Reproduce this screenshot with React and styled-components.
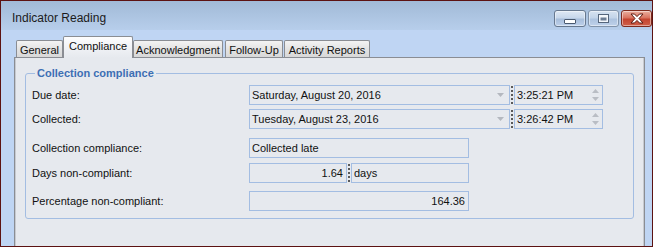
import React from 'react';
import styled, { createGlobalStyle } from 'styled-components';

const Global = createGlobalStyle`
  html, body { margin: 0; padding: 0; }
  body {
    font-family: "Liberation Sans", Arial, sans-serif;
    font-size: 11px;
    color: #000;
  }
`;

const Window = styled.div`
  width: 653px;
  height: 247px;
  box-sizing: border-box;
  border: 1px solid #5c1212;
  display: flex;
  flex-direction: column;
  background: #bfd5f3;
  overflow: hidden;
`;

const TitleBar = styled.div`
  height: 29px;
  flex: none;
  display: flex;
  align-items: flex-start;
  background: linear-gradient(#a1bad7, #b7ceeb);
`;

const Title = styled.div`
  flex: 1;
  font-size: 12px;
  line-height: 14px;
  color: #1b1b1b;
  padding: 10px 0 0 11px;
`;

const Controls = styled.div`
  display: flex;
  gap: 2px;
  margin-top: 9px;
`;

const CtrlButton = styled.div`
  width: ${(p) => p.$w}px;
  height: 17px;
  box-sizing: border-box;
  border-radius: 3px;
  border: 1px solid ${(p) => (p.$close ? '#7d2a1d' : p.$dim ? '#8193aa' : '#67788f')};
  background: ${(p) =>
    p.$close
      ? 'linear-gradient(#eab0a0 0%, #d9735f 45%, #c4442f 55%, #cf5f48 100%)'
      : p.$dim
      ? 'linear-gradient(#d6e2f0 0%, #c3d4e9 45%, #adc3df 55%, #bed1ea 100%)'
      : 'linear-gradient(#dfe8f4 0%, #c7d7eb 45%, #a8bedb 55%, #bdd0ea 100%)'};
  box-shadow: inset 0 0 0 1px rgba(255, 255, 255, 0.45);
  display: flex;
  align-items: center;
  justify-content: center;
`;

const Body = styled.div`
  flex: 1;
  display: flex;
  flex-direction: column;
  padding: 0 7px 0 13px;
  min-height: 0;
`;

const TabStrip = styled.div`
  height: 27px;
  flex: none;
  display: flex;
  align-items: flex-end;
  padding-left: 2px;
  position: relative;
  z-index: 1;
`;

const Tab = styled.div`
  box-sizing: border-box;
  width: ${(p) => p.$w}px;
  margin-left: ${(p) => p.$ml || 0}px;
  height: ${(p) => (p.$active ? 22 : 17)}px;
  margin-bottom: ${(p) => (p.$active ? -1 : 0)}px;
  border: 1px solid #8a8d93;
  border-bottom: none;
  border-radius: 2px 2px 0 0;
  background: ${(p) =>
    p.$active ? 'linear-gradient(#fdfdfe, #eef0f4 60%, #e6e9ee)' : 'linear-gradient(#f3f3f3, #e3e3e3 50%, #d8d8d8)'};
  display: flex;
  align-items: ${(p) => (p.$active ? 'flex-start' : 'center')};
  padding-top: ${(p) => (p.$active ? 3 : 1)}px;
  justify-content: center;
  color: #111;
  white-space: nowrap;
`;

const Panel = styled.div`
  flex: 1;
  border: 1px solid #8a8d93;
  border-bottom: none;
  background: #e6e9ee;
  box-shadow: inset 1px 0 0 #c7cad0, inset -1px 0 0 #c7cad0;
  padding: 8px 10px 0 10px;
`;

const Group = styled.fieldset`
  margin: 0;
  min-width: 0;
  border: 1px solid #a3bde2;
  border-radius: 3px;
  padding: 5px 6px 7px 6px;
`;

const Legend = styled.legend`
  margin-left: 3px;
  padding: 0 2px;
  font-weight: bold;
  font-size: 11px;
  line-height: 14px;
  color: #3d6fb4;
`;

const Row = styled.div`
  display: flex;
  align-items: center;
  height: 20px;
  margin-top: ${(p) => p.$mt || 0}px;
`;

const Label = styled.div`
  width: 217px;
  flex: none;
  color: #111;
  white-space: nowrap;
`;

const Field = styled.div`
  box-sizing: border-box;
  width: ${(p) => p.$w}px;
  height: 20px;
  flex: none;
  border: 1px solid #a3bde2;
  padding: 0 ${(p) => (p.$right ? 3 : 2)}px 0 2px;
  display: flex;
  align-items: center;
  justify-content: ${(p) => (p.$right ? 'flex-end' : 'flex-start')};
  color: #111;
  white-space: nowrap;
`;

const FieldText = styled.span`
  flex: ${(p) => (p.$grow ? 1 : 'none')};
`;

const Separator = styled.div`
  width: 0;
  height: 18px;
  border-left: 2px dotted #5a5a5a;
  margin: 0 1px 0 1px;
  flex: none;
`;

const DropArrow = () => (
  <svg width="7" height="4" viewBox="0 0 7 4" style={{ marginRight: 3 }}>
    <path d="M0 0 H7 L3.5 4 Z" fill="#b4b8bf" />
  </svg>
);

const Spinner = () => (
  <svg width="7" height="14" viewBox="0 0 7 14" style={{ marginRight: 1 }}>
    <path d="M0 5 H7 L3.5 1 Z" fill="#b9bdc4" />
    <path d="M0 9 H7 L3.5 13 Z" fill="#b9bdc4" />
  </svg>
);

const MinGlyph = () => (
  <svg width="12" height="6" viewBox="0 0 12 6" style={{ marginTop: 7 }}>
    <rect x="0.5" y="0.5" width="11" height="4" rx="0.5" fill="#fff" stroke="#4a5a70" />
  </svg>
);

const MaxGlyph = () => (
  <svg width="11" height="9" viewBox="0 0 11 9">
    <rect x="0.5" y="0.5" width="10" height="8" fill="#f4f7fb" stroke="#55657b" />
    <rect x="2.5" y="3.5" width="6" height="3" fill="#6e7e94" />
  </svg>
);

const CloseGlyph = () => (
  <svg width="14" height="11" viewBox="0 0 14 11">
    <path
      d="M1 1 H4.5 L7 3.6 L9.5 1 H13 L9 5.5 L13 10 H9.5 L7 7.4 L4.5 10 H1 L5 5.5 Z"
      fill="#ffffff"
      stroke="#5a1a10"
      strokeWidth="1"
      strokeLinejoin="round"
    />
  </svg>
);

export default function App() {
  return (
    <>
      <Global />
      <Window>
        <TitleBar>
          <Title>Indicator Reading</Title>
          <Controls>
            <CtrlButton $w={32}>
              <MinGlyph />
            </CtrlButton>
            <CtrlButton $w={31} $dim>
              <MaxGlyph />
            </CtrlButton>
            <CtrlButton $w={31} $close>
              <CloseGlyph />
            </CtrlButton>
          </Controls>
        </TitleBar>
        <Body>
          <TabStrip>
            <Tab $w={47}>General</Tab>
            <Tab $w={70} $active>Compliance</Tab>
            <Tab $w={90}>Acknowledgment</Tab>
            <Tab $w={58} $ml={2}>Follow-Up</Tab>
            <Tab $w={86} $ml={1}>Activity Reports</Tab>
          </TabStrip>
          <Panel>
            <Group>
              <Legend>Collection compliance</Legend>
              <Row>
                <Label>Due date:</Label>
                <Field $w={261}>
                  <FieldText $grow>Saturday, August 20, 2016</FieldText>
                  <DropArrow />
                </Field>
                <Separator />
                <Field $w={89}>
                  <FieldText $grow>3:25:21 PM</FieldText>
                  <Spinner />
                </Field>
              </Row>
              <Row $mt={4}>
                <Label>Collected:</Label>
                <Field $w={261}>
                  <FieldText $grow>Tuesday, August 23, 2016</FieldText>
                  <DropArrow />
                </Field>
                <Separator />
                <Field $w={89}>
                  <FieldText $grow>3:26:42 PM</FieldText>
                  <Spinner />
                </Field>
              </Row>
              <Row $mt={9}>
                <Label>Collection compliance:</Label>
                <Field $w={220}>
                  <FieldText>Collected late</FieldText>
                </Field>
              </Row>
              <Row $mt={5}>
                <Label>Days non-compliant:</Label>
                <Field $w={98} $right>
                  <FieldText>1.64</FieldText>
                </Field>
                <Separator />
                <Field $w={118}>
                  <FieldText>days</FieldText>
                </Field>
              </Row>
              <Row $mt={8}>
                <Label>Percentage non-compliant:</Label>
                <Field $w={220} $right>
                  <FieldText>164.36</FieldText>
                </Field>
              </Row>
            </Group>
          </Panel>
        </Body>
      </Window>
    </>
  );
}
